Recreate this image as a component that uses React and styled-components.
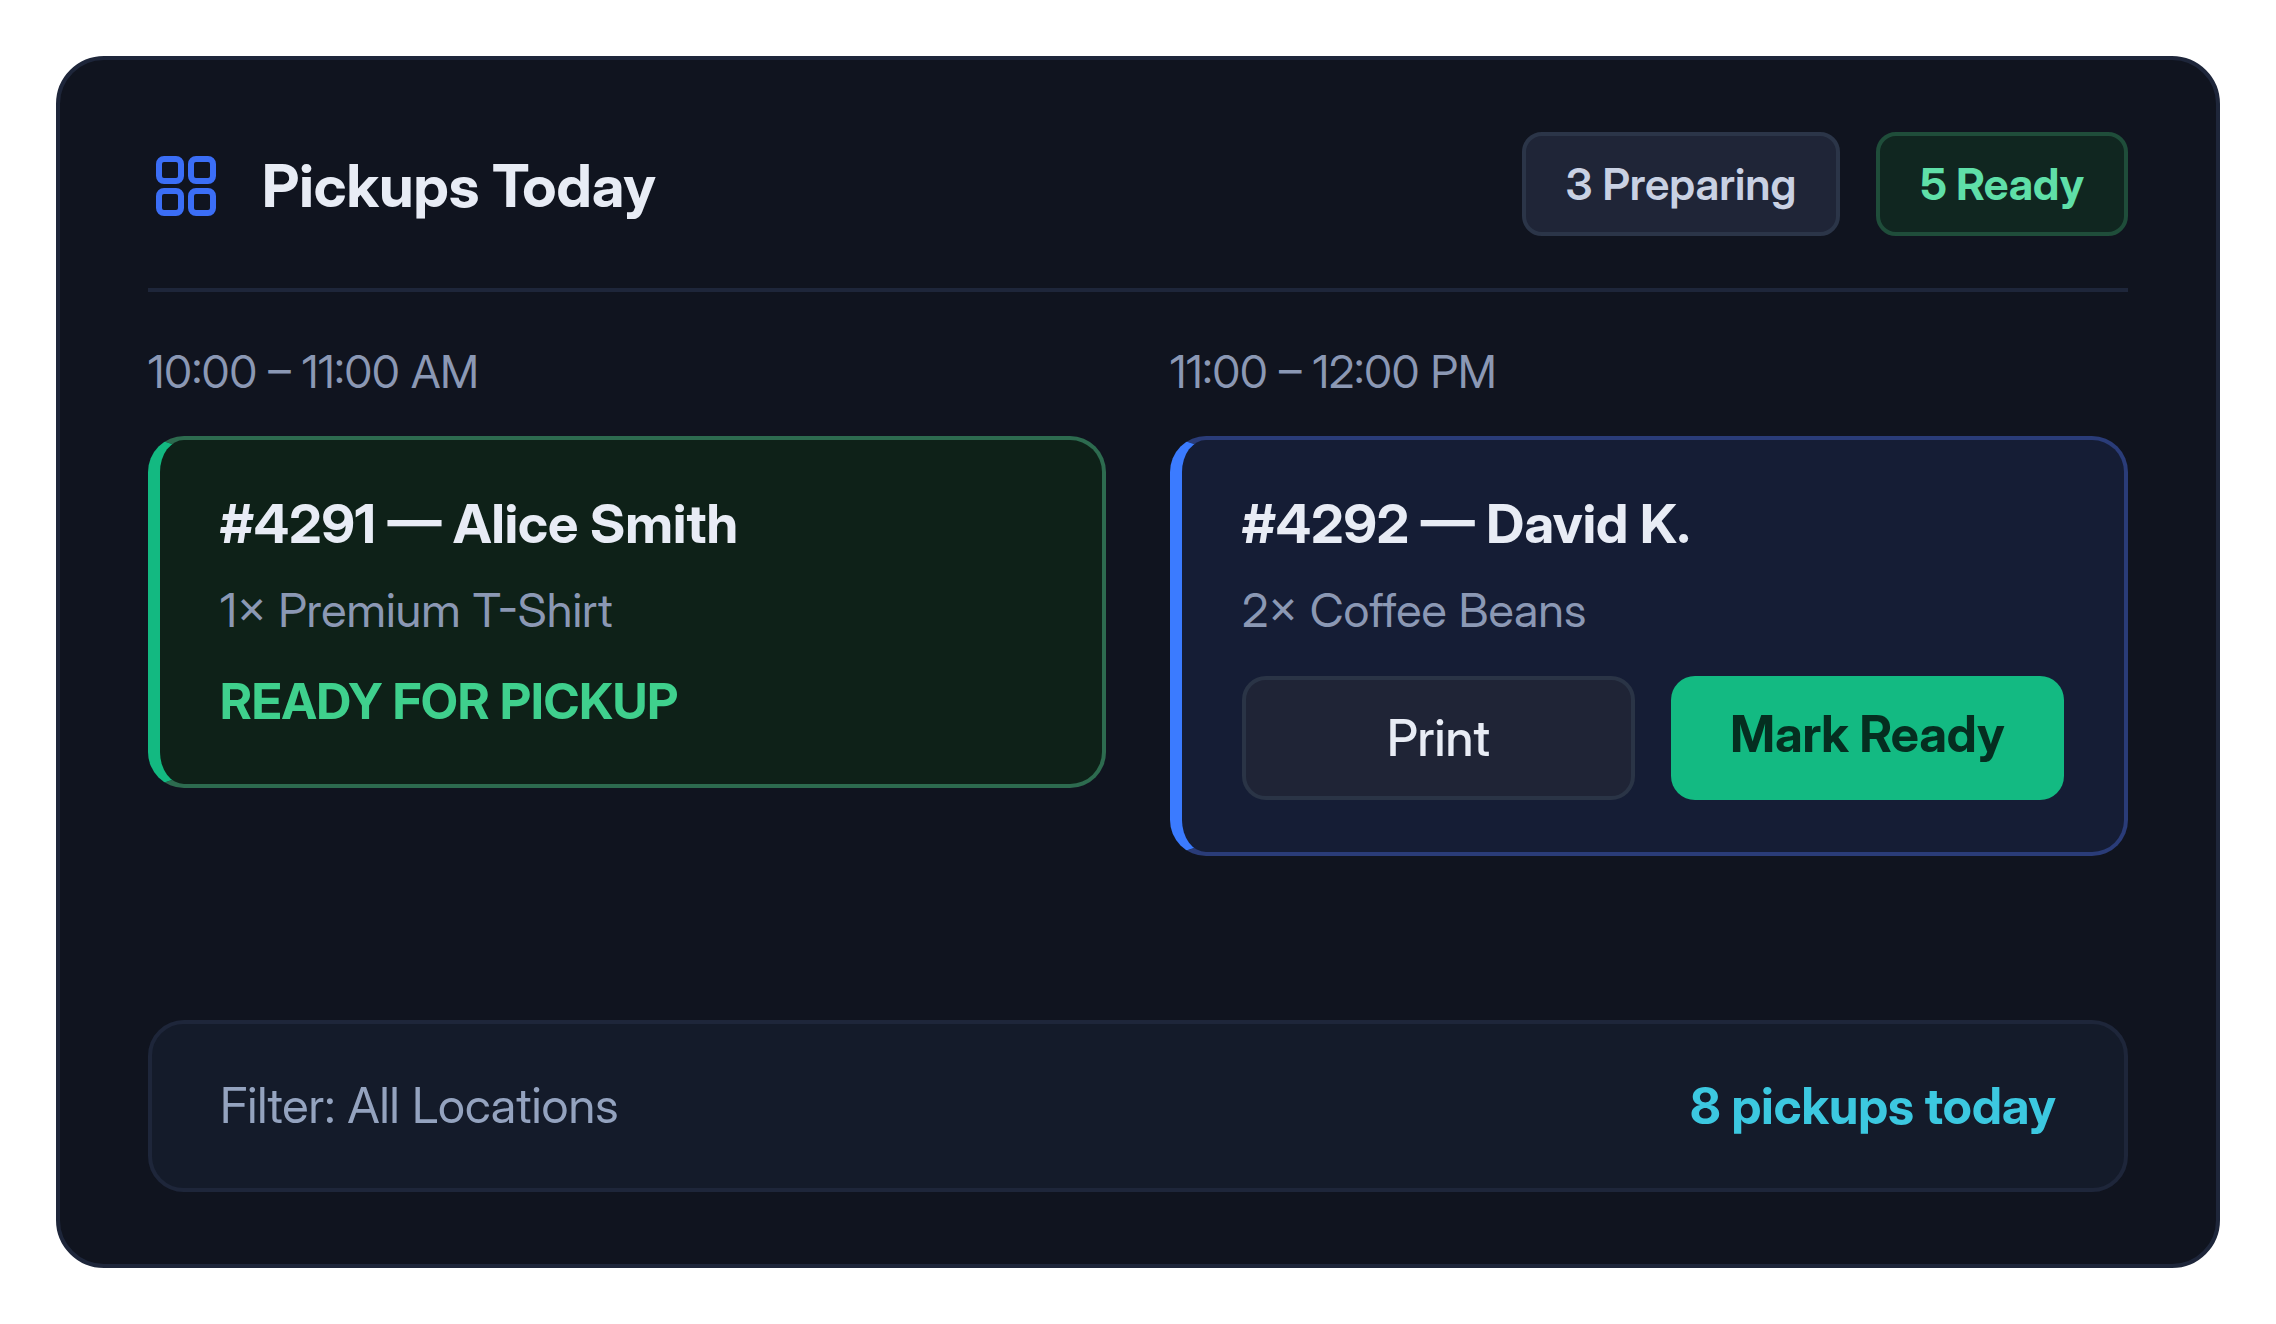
import React from "react";
import styled, { createGlobalStyle } from "styled-components";

const GlobalStyle = createGlobalStyle`
  * {
    box-sizing: border-box;
  }
  body {
    margin: 0;
    background: #ffffff;
    font-family: "Inter Display", "Inter Variable", Inter, "Liberation Sans", sans-serif;
    font-variation-settings: "opsz" 32;
  }
`;

const PageWrapper = styled.div`
  display: flex;
  min-height: 100vh;
  padding: 56px;
`;

const Panel = styled.main`
  display: flex;
  flex-direction: column;
  flex: 1;
  padding: 72px 88px;
  background: #10141f;
  border: 4px solid #1e263a;
  border-radius: 48px;
`;

const Header = styled.header`
  display: flex;
  justify-content: space-between;
  align-items: flex-start;
  padding-bottom: 48px;
  border-bottom: 4px solid #1e263a;
`;

const TitleGroup = styled.div`
  display: flex;
  align-items: center;
  gap: 38px;
`;

const Title = styled.h1`
  margin: 0;
  color: #e8ecf5;
  font-size: 59px;
  font-weight: 700;
  line-height: 108px;
`;

const PillGroup = styled.div`
  display: flex;
  gap: 36px;
`;

const Pill = styled.span`
  padding: 20px 40px;
  color: ${(props) => (props.$ready ? "#5fdfa8" : "#c9d1e3")};
  background: ${(props) => (props.$ready ? "#102620" : "#1f2537")};
  border: 4px solid ${(props) => (props.$ready ? "#1f4d3a" : "#2b3548")};
  border-radius: 20px;
  font-size: 44px;
  font-weight: ${(props) => (props.$ready ? 700 : 600)};
  line-height: 56px;
`;

const Slots = styled.div`
  display: grid;
  grid-template-columns: 1fr 1fr;
  align-items: start;
  gap: 64px;
  margin: 52px 0;
`;

const SlotTime = styled.h2`
  margin: 0 0 36px;
  color: #8b98b4;
  font-size: 45px;
  font-weight: 400;
  line-height: 56px;
`;

const OrderCard = styled.article`
  padding: 48px 60px 52px;
  background: ${(props) => (props.$ready ? "#0e2118" : "#151d35")};
  border: 4px solid ${(props) => (props.$ready ? "#2d6b4f" : "#2a3c78")};
  border-left: 12px solid ${(props) => (props.$ready ? "#13b981" : "#3b7bff")};
  border-radius: 36px;
`;

const OrderName = styled.h3`
  margin: 0 0 20px;
  color: #e8ecf5;
  font-size: 54px;
  font-weight: 700;
  line-height: 72px;
`;

const OrderItem = styled.p`
  margin: 0;
  color: #8b98b4;
  font-size: 47px;
  line-height: 60px;
`;

const OrderStatus = styled.p`
  margin: 32px 0 0;
  color: #3fd08d;
  font-size: 49px;
  font-weight: 700;
  line-height: 60px;
  text-transform: uppercase;
`;

const Actions = styled.div`
  display: grid;
  grid-template-columns: 1fr 1fr;
  gap: 36px;
  margin-top: 36px;
`;

const ActionButton = styled.button`
  padding: 28px 0;
  color: #e8ecf5;
  background: #1f2436;
  border: 4px solid #2a3446;
  border-radius: 24px;
  font-family: inherit;
  font-size: 50px;
  font-weight: 500;
  line-height: 60px;
  cursor: pointer;
`;

const PrimaryButton = styled(ActionButton)`
  padding-bottom: 36px;
  color: #052e20;
  background: #13ba82;
  border: none;
  font-weight: 700;
`;

const FilterBar = styled.footer`
  display: flex;
  justify-content: space-between;
  margin-top: auto;
  padding: 52px 68px;
  background: #141b2a;
  border: 4px solid #1e263a;
  border-radius: 36px;
  line-height: 60px;
`;

const FilterText = styled.span`
  color: #94a3bf;
  font-size: 49px;
`;

const TotalText = styled.span`
  color: #3cc8e0;
  font-size: 50px;
  font-weight: 700;
`;

function GridIcon() {
  return (
    <svg width="76" height="76" viewBox="0 0 76 76" fill="none" stroke="#3b6ef6" strokeWidth="6" aria-hidden="true">
      <rect x="11" y="11" width="22" height="22" rx="5" />
      <rect x="43" y="11" width="22" height="22" rx="5" />
      <rect x="11" y="43" width="22" height="22" rx="5" />
      <rect x="43" y="43" width="22" height="22" rx="5" />
    </svg>
  );
}

export default function PickupsToday() {
  return (
    <PageWrapper>
      <GlobalStyle />
      <Panel>
        <Header>
          <TitleGroup>
            <GridIcon />
            <Title>Pickups Today</Title>
          </TitleGroup>
          <PillGroup>
            <Pill>3 Preparing</Pill>
            <Pill $ready>5 Ready</Pill>
          </PillGroup>
        </Header>
        <Slots>
          <section>
            <SlotTime>10:00 – 11:00 AM</SlotTime>
            <OrderCard $ready>
              <OrderName>#4291 — Alice Smith</OrderName>
              <OrderItem>1× Premium T-Shirt</OrderItem>
              <OrderStatus>Ready for pickup</OrderStatus>
            </OrderCard>
          </section>
          <section>
            <SlotTime>11:00 – 12:00 PM</SlotTime>
            <OrderCard>
              <OrderName>#4292 — David K.</OrderName>
              <OrderItem>2× Coffee Beans</OrderItem>
              <Actions>
                <ActionButton type="button">Print</ActionButton>
                <PrimaryButton type="button">Mark Ready</PrimaryButton>
              </Actions>
            </OrderCard>
          </section>
        </Slots>
        <FilterBar>
          <FilterText>Filter: All Locations</FilterText>
          <TotalText>8 pickups today</TotalText>
        </FilterBar>
      </Panel>
    </PageWrapper>
  );
}
